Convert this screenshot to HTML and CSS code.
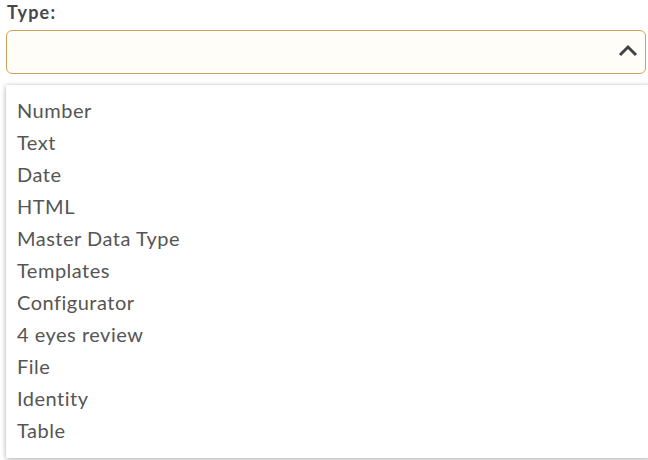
FILE: index.html
```html
<!DOCTYPE html>
<html>
<head>
<meta charset="utf-8">
<link rel="stylesheet" href="styles.css">
</head>
<body>
<div class="field">
  <div class="label">Type:</div>
  <div class="select">
    <svg class="chevron" width="20" height="14" viewBox="0 0 20 14"><path d="M2 11 L10 3 L18 11" fill="none" stroke="#3f4347" stroke-width="3"/></svg>
  </div>
  <ul class="menu">
    <li>Number</li>
    <li>Text</li>
    <li>Date</li>
    <li>HTML</li>
    <li>Master Data Type</li>
    <li>Templates</li>
    <li>Configurator</li>
    <li>4 eyes review</li>
    <li>File</li>
    <li>Identity</li>
    <li>Table</li>
  </ul>
</div>
</body>
</html>
```
FILE: styles.css
```css
html, body {
  margin: 0;
  padding: 0;
  background: #fff;
  overflow: hidden;
  width: 648px;
  height: 460px;
}
body {
  font-family: "Lato", "Liberation Sans", sans-serif;
  color: #4a4a4a;
}
.field {
  padding-left: 6px;
  width: 644px;
}
.label {
  font-weight: 700;
  font-size: 18px;
  line-height: 24px;
  height: 30px;
  padding-left: 1px;
  letter-spacing: 1.2px;
  color: #45484b;
}
.select {
  width: 638px;
  height: 42px;
  border: 1px solid #d0a256;
  border-radius: 6px;
  background: #fffdf8;
  display: flex;
  align-items: center;
  justify-content: flex-end;
}
.chevron {
  margin-right: 7px;
  margin-top: -2px;
}
.menu {
  list-style: none;
  margin: 11px 0 0 0;
  padding: 9px 0 12px 11px;
  background: #fff;
  box-shadow: 0 1px 5px rgba(0, 0, 0, 0.35);
  font-size: 20px;
  letter-spacing: 0.5px;
  color: #555555;
}
.menu li {
  line-height: 32px;
  height: 32px;
}
```
